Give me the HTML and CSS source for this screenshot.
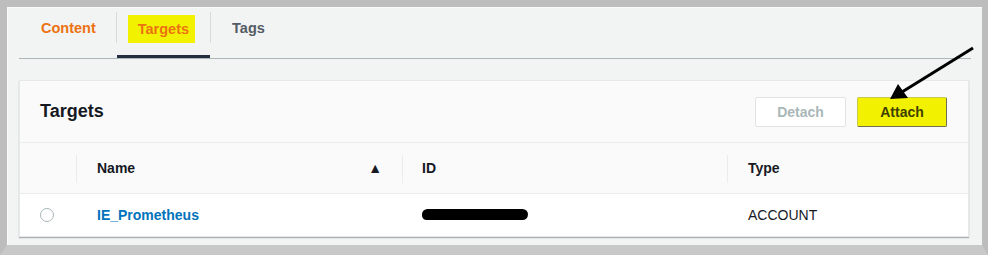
FILE: index.html
```html
<!DOCTYPE html>
<html lang="en">
<head>
    <meta charset="UTF-8">
    <title>Targets</title>
    <link rel="stylesheet" href="styles.css">
</head>
<body>
<div class="frame">
    <div class="tabs">
        <div class="tab tab_content">Content</div>
        <div class="tab tab_active"><span class="mark">Targets</span></div>
        <div class="tab tab_tags">Tags</div>
    </div>
    <div class="card">
        <div class="card_head">
            <div class="card_title">Targets</div>
            <div class="actions">
                <div class="btn btn_off">Detach</div>
                <div class="btn btn_attach">Attach</div>
            </div>
        </div>
        <div class="row row_head">
            <div class="cell col_sel"></div>
            <div class="cell col_name sep">Name <span class="sort">&#9650;</span></div>
            <div class="cell col_id sep">ID</div>
            <div class="cell col_type sep">Type</div>
        </div>
        <div class="row">
            <div class="cell col_sel"><span class="radio"></span></div>
            <div class="cell col_name"><span class="link">IE_Prometheus</span></div>
            <div class="cell col_id"><span class="blot"></span></div>
            <div class="cell col_type">ACCOUNT</div>
        </div>
    </div>
</div>
<svg class="arrow" width="996" height="259" viewBox="0 0 996 259">
    <line x1="973" y1="48" x2="902" y2="92" stroke="#000" stroke-width="3"></line>
    <polygon points="890,99 898,84 908,98" fill="#000"></polygon>
</svg>
</body>
</html>
```

FILE: styles.css
```css
* {
    box-sizing: border-box;
}

body {
    margin: 0;
    background: #fff;
    font-family: "Liberation Sans", Arial, sans-serif;
    color: #16191f;
}

.frame {
    width: 988px;
    height: 255px;
    border-top: 7px solid #bdbdbd;
    border-left: 7px solid #bdbdbd;
    border-right: 6px solid #bdbdbd;
    border-bottom: 10px solid #c8c8c8;
    background: #f2f3f3;
    padding: 0 12px;
    box-shadow: inset 1px 1px 0 #fafafa;
}

.tabs {
    display: flex;
    height: 52px;
    border-bottom: 1px solid #aab7b8;
    margin-right: -1px;
}

.tab {
    position: relative;
    display: flex;
    align-items: center;
    height: 51px;
    padding: 0 21px 9px 22px;
    font-size: 14.5px;
    font-weight: bold;
}

.tab + .tab::before {
    content: "";
    position: absolute;
    left: 0;
    top: 5px;
    height: 31px;
    width: 1px;
    background: #d5dbdb;
}

.tab_content {
    color: #ec7211;
}

.tab_active {
    padding: 0 15px 5px 11px;
    border-bottom: 3px solid #232f3e;
}

.tab_active::before {
    left: -1px !important;
}

.mark {
    background: #f2f200;
    color: #ec7211;
    padding: 6px 6px 6px 10px;
}

.tab_tags {
    color: #545b64;
}

.card {
    margin-top: 21px;
    width: 950px;
    background: #fff;
    border: 1px solid #e6e9e9;
    box-shadow: 0 1px 1px rgba(0, 28, 36, 0.3);
}

.card_head {
    display: flex;
    align-items: center;
    justify-content: space-between;
    height: 62px;
    padding: 0 21px 0 20px;
    background: #fafafa;
    border-bottom: 1px solid #eaeded;
}

.card_title {
    font-size: 18px;
    font-weight: bold;
}

.actions {
    display: flex;
    gap: 11px;
}

.btn {
    display: flex;
    align-items: center;
    justify-content: center;
    height: 30px;
    font-size: 14px;
    font-weight: bold;
    border-radius: 2px;
}

.btn_off {
    width: 91px;
    background: #fff;
    color: #aab7b8;
    border: 1px solid #e0e4e4;
}

.btn_attach {
    width: 90px;
    background: #f2f200;
    color: #3f3f00;
    border: 1px solid #6f6f50;
    border-top-color: #c8c850;
    border-left-color: #c8c850;
}

.row {
    display: flex;
    height: 42px;
    align-items: center;
    font-size: 14px;
}

.row_head {
    height: 51px;
    background: #fafafa;
    border-bottom: 1px solid #eaeded;
    font-weight: bold;
}

.cell {
    position: relative;
    display: flex;
    align-items: center;
    height: 100%;
}

.sep::before {
    content: "";
    position: absolute;
    left: 0;
    top: 12px;
    height: 28px;
    width: 1px;
    background: #eaeded;
}

.col_sel {
    width: 56px;
    padding-left: 20px;
}

.col_name {
    width: 326px;
    padding-left: 21px;
    padding-right: 20px;
}

.col_id {
    width: 325px;
    padding-left: 20px;
}

.col_type {
    flex: 1;
    padding-left: 21px;
}

.sort {
    margin-left: auto;
    font-size: 14px;
    color: #16191f;
}

.radio {
    width: 14px;
    height: 14px;
    border: 1px solid #aab7b8;
    border-radius: 50%;
    background: #fff;
}

.link {
    color: #0073bb;
    font-weight: bold;
}

.blot {
    width: 106px;
    height: 11px;
    background: #000;
    border-radius: 6px 6px 6px 5px;
    margin-top: -1px;
}

.arrow {
    position: absolute;
    left: 0;
    top: 0;
    pointer-events: none;
}
```
